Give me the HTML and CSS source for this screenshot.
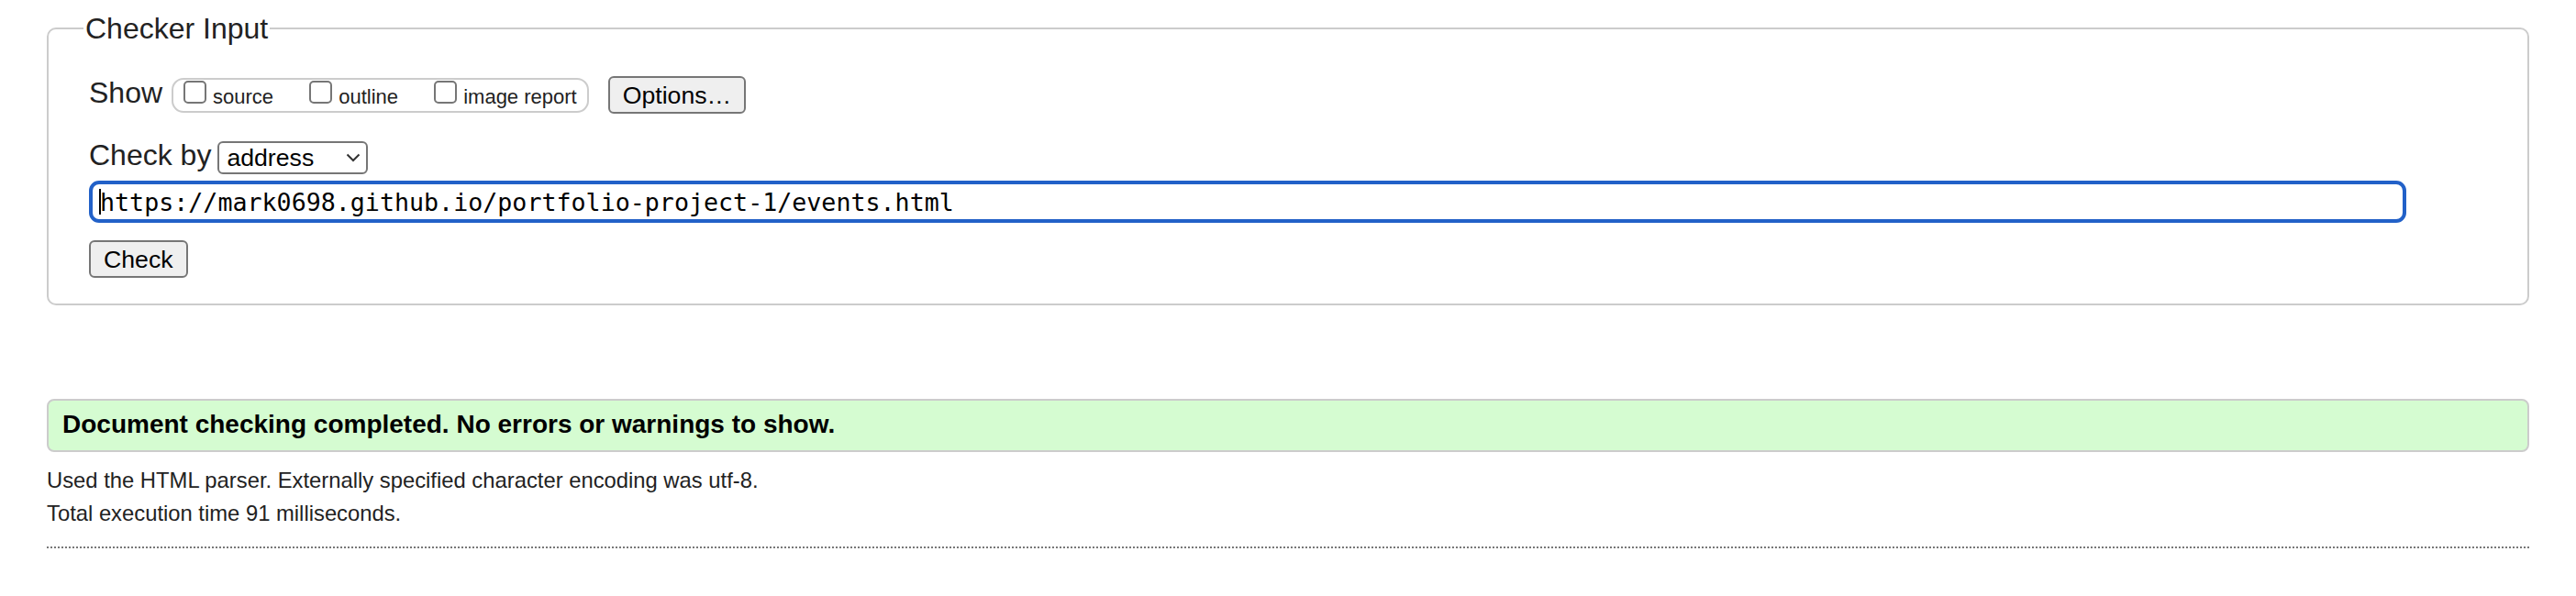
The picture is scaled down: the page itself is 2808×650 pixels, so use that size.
FILE: index.html
```html
<!DOCTYPE html>
<html lang="en">
<head>
<meta charset="utf-8">
<title>Nu Html Checker</title>
<link rel="stylesheet" href="styles.css">
</head>
<body>
<form class="checker-form">
  <fieldset class="checker">
    <legend class="checker-legend">Checker Input</legend>
    <div class="row row-show">
      <span class="row-label">Show</span>
      <fieldset class="show-group">
        <label class="opt"><input type="checkbox" class="cb">source</label>
        <label class="opt"><input type="checkbox" class="cb">outline</label>
        <label class="opt"><input type="checkbox" class="cb">image report</label>
      </fieldset>
      <button type="button" class="btn btn-options">Options…</button>
    </div>
    <div class="row row-by">
      <span class="row-label">Check by</span>
      <span class="select-wrap">
        <select class="select"><option>address</option></select>
        <svg class="chevron" width="16" height="10" viewBox="0 0 16 10"><path d="M1.5 1.5 L8 8 L14.5 1.5" fill="none" stroke="#333" stroke-width="2"/></svg>
      </span>
    </div>
    <div class="row row-url">
      <input class="url" type="url" value="https://mark0698.github.io/portfolio-project-1/events.html">
      <span class="caret"></span>
    </div>
    <div class="row row-check">
      <button type="button" class="btn btn-check">Check</button>
    </div>
  </fieldset>
</form>
<div class="success"><p class="success-text">Document checking completed. No errors or warnings to show.</p></div>
<div class="details">
  <p class="detail">Used the HTML parser. Externally specified character encoding was utf-8.</p>
  <p class="detail">Total execution time 91 milliseconds.</p>
</div>
<div class="rule"></div>
</body>
</html>
```
FILE: styles.css
```css
* { box-sizing: border-box; }
html, body { background: #fff; }
body {
  margin: 0;
  padding: 13px 51px 0;
  font-family: "Liberation Sans", Arial, Helvetica, sans-serif;
  color: #222;
}
.checker-form { margin: 0; }
.checker {
  margin: 0;
  min-width: 0;
  border: 2px solid #ccc;
  border-radius: 10px;
  padding: 34px 44px 28px;
}
.checker-legend {
  font-size: 32px;
  line-height: 36px;
  padding: 0 2px;
  margin-left: -6px;
  color: #222;
}
.row { display: flex; align-items: center; }
.row-show { height: 41px; }
.row-label { font-size: 32px; line-height: 36px; padding-bottom: 6px; white-space: nowrap; }
.show-group {
  margin: 0 0 0 10px;
  min-width: 0;
  border: 2px solid #ccc;
  border-radius: 13px;
  padding: 1px 11px 3px;
  font-size: 22px;
  display: block;
  height: 38px;
}
.opt { display: inline-block; margin-right: 33px; color: #222; white-space: nowrap; }
.opt:last-child { margin-right: 0; }
.cb {
  -webkit-appearance: none;
  appearance: none;
  display: inline-block;
  vertical-align: baseline;
  width: 25px;
  height: 25px;
  margin: 0 7px 0 0;
  border: 2px solid #767676;
  border-radius: 5px;
  background: #fff;
}
.btn {
  font-family: "Liberation Sans", Arial, Helvetica, sans-serif;
  font-size: 26.67px;
  color: #000;
  background: #efefef;
  border: 2px solid #767676;
  border-radius: 6px;
  padding: 0 14px;
  height: 41px;
  line-height: 36px;
  margin: 0;
}
.btn-options { margin-left: 21px; }
.row-by { margin-top: 30px; height: 36px; }
.select-wrap { position: relative; display: inline-block; margin-left: 7px; }
.select {
  -webkit-appearance: none;
  appearance: none;
  display: block;
  width: 164px;
  height: 36px;
  border: 2px solid #767676;
  border-radius: 6px;
  background: #fff;
  color: #000;
  font-family: "Liberation Sans", Arial, Helvetica, sans-serif;
  font-size: 26.67px;
  padding: 0 0 0 8px;
  margin: 0;
}
.chevron { position: absolute; left: 140px; top: 13px; pointer-events: none; }
.row-url { margin-top: 7px; position: relative; }
.url {
  display: block;
  width: 2526px;
  height: 46px;
  border: 4px solid #2261c8;
  border-radius: 11px;
  padding: 0 0 0 8px;
  margin: 0;
  font-family: "DejaVu Sans Mono", "Liberation Mono", monospace;
  font-size: 26.67px;
  color: #000;
  background: #fff;
  outline: none;
}
.caret { position: absolute; left: 11px; top: 9px; width: 2px; height: 28px; background: #000; }
.row-check { margin-top: 19px; }
.success {
  margin-top: 102px;
  border: 2px solid #ccc;
  border-radius: 8px;
  background: #d5fcd1;
  padding: 10px 15px 12px;
}
.success-text {
  margin: 0;
  font-size: 28px;
  line-height: 32px;
  font-weight: bold;
  color: #000;
}
.details { margin-top: 13px; }
.detail { margin: 0; font-size: 23.8px; line-height: 36px; color: #222; }
.rule { margin-top: 18px; border-top: 2px dotted #777; }
```
